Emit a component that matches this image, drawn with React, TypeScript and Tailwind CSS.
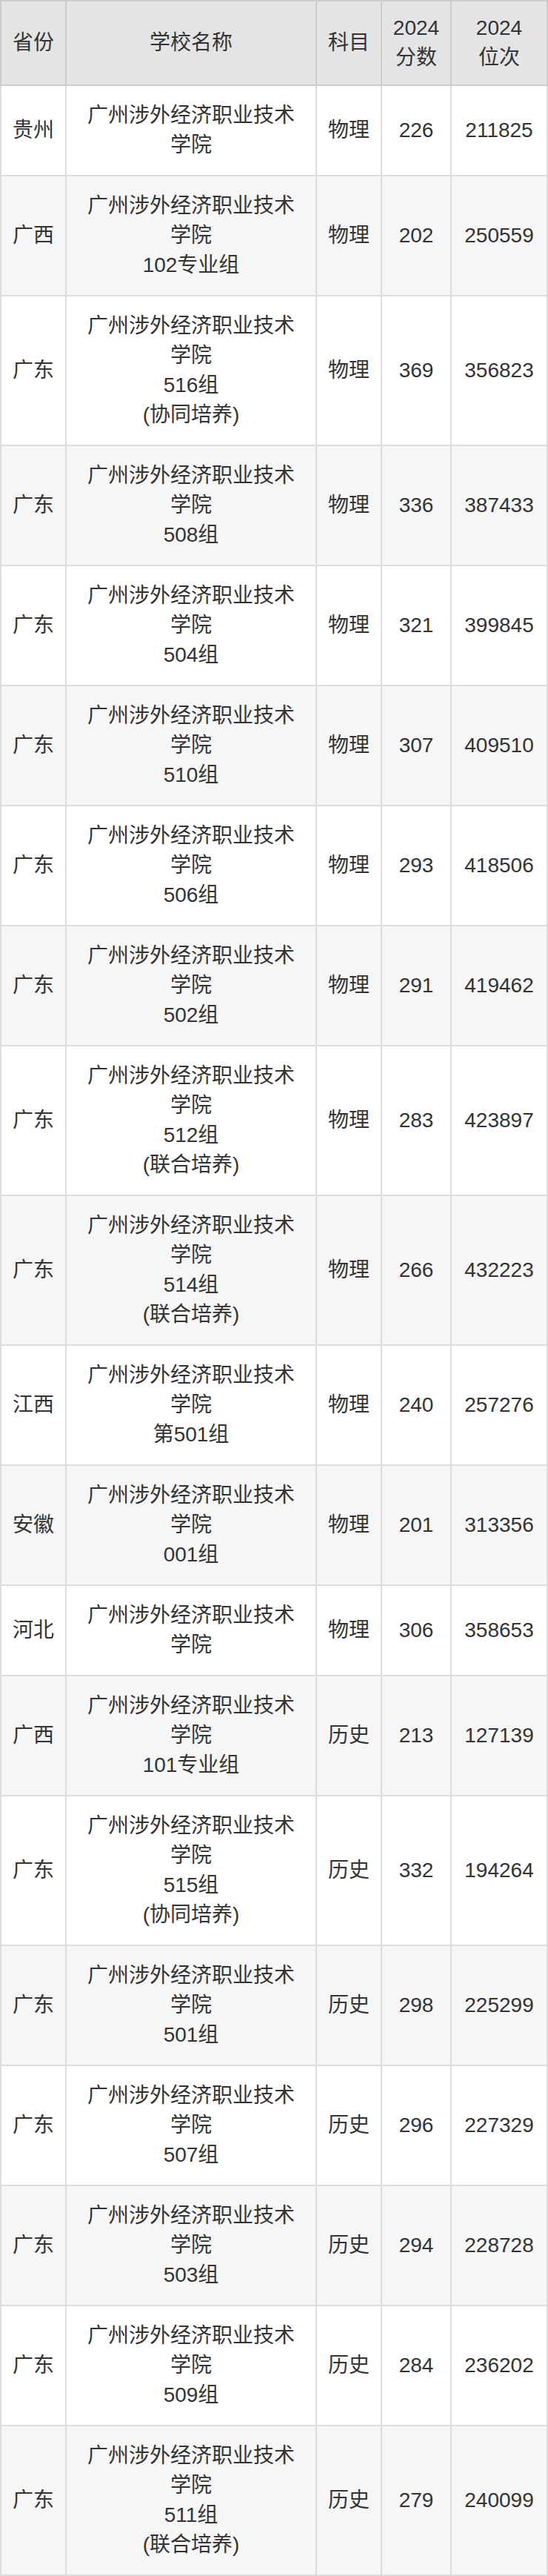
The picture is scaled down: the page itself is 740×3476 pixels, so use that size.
import React from "react"

interface Row {
  province: string
  school: string[]
  subject: string
  score: string
  rank: string
}

const SCHOOL = ["广州涉外经济职业技术学院"]

const headers: string[][] = [["省份"], ["学校名称"], ["科目"], ["2024", "分数"], ["2024", "位次"]]

const rows: Row[] = [
  { province: "贵州", school: SCHOOL, subject: "物理", score: "226", rank: "211825" },
  { province: "广西", school: [...SCHOOL, "102专业组"], subject: "物理", score: "202", rank: "250559" },
  { province: "广东", school: [...SCHOOL, "516组", "(协同培养)"], subject: "物理", score: "369", rank: "356823" },
  { province: "广东", school: [...SCHOOL, "508组"], subject: "物理", score: "336", rank: "387433" },
  { province: "广东", school: [...SCHOOL, "504组"], subject: "物理", score: "321", rank: "399845" },
  { province: "广东", school: [...SCHOOL, "510组"], subject: "物理", score: "307", rank: "409510" },
  { province: "广东", school: [...SCHOOL, "506组"], subject: "物理", score: "293", rank: "418506" },
  { province: "广东", school: [...SCHOOL, "502组"], subject: "物理", score: "291", rank: "419462" },
  { province: "广东", school: [...SCHOOL, "512组", "(联合培养)"], subject: "物理", score: "283", rank: "423897" },
  { province: "广东", school: [...SCHOOL, "514组", "(联合培养)"], subject: "物理", score: "266", rank: "432223" },
  { province: "江西", school: [...SCHOOL, "第501组"], subject: "物理", score: "240", rank: "257276" },
  { province: "安徽", school: [...SCHOOL, "001组"], subject: "物理", score: "201", rank: "313356" },
  { province: "河北", school: SCHOOL, subject: "物理", score: "306", rank: "358653" },
  { province: "广西", school: [...SCHOOL, "101专业组"], subject: "历史", score: "213", rank: "127139" },
  { province: "广东", school: [...SCHOOL, "515组", "(协同培养)"], subject: "历史", score: "332", rank: "194264" },
  { province: "广东", school: [...SCHOOL, "501组"], subject: "历史", score: "298", rank: "225299" },
  { province: "广东", school: [...SCHOOL, "507组"], subject: "历史", score: "296", rank: "227329" },
  { province: "广东", school: [...SCHOOL, "503组"], subject: "历史", score: "294", rank: "228728" },
  { province: "广东", school: [...SCHOOL, "509组"], subject: "历史", score: "284", rank: "236202" },
  { province: "广东", school: [...SCHOOL, "511组", "(联合培养)"], subject: "历史", score: "279", rank: "240099" },
]

const cols = "grid grid-cols-[86px_336px_86px_92px_128px] gap-[2px]"
const cell = "flex flex-col items-center justify-center text-center px-[15px]"

export default function App() {
  return (
    <div
      className="w-[740px] text-[28px] leading-[40px] text-[#333]"
      style={{ fontFamily: '"Liberation Sans", Arial, "Noto Sans CJK SC", sans-serif' }}
    >
      {/* Header */}
      <div className={`${cols} p-[2px] bg-[#cccccc]`}>
        {headers.map((h) => (
          <div key={h.join("")} className={`${cell} py-4 bg-[#e4e4e4]`}>
            {h.map((line) => (
              <div key={line} className="whitespace-nowrap">{line}</div>
            ))}
          </div>
        ))}
      </div>

      {/* Body */}
      <div className={`${cols} px-[2px] pb-[2px] pt-0 bg-[#dddddd]`}>
        {rows.map((r, i) => {
          const bg = i % 2 === 0 ? "bg-white" : "bg-[#f6f6f6]"
          return (
            <React.Fragment key={i}>
              <div className={`${cell} py-5 ${bg}`}>{r.province}</div>
              <div className={`${cell} py-5 ${bg}`}>
                {r.school.map((line) => (
                  <div key={line}>{line}</div>
                ))}
              </div>
              <div className={`${cell} py-5 ${bg}`}>{r.subject}</div>
              <div className={`${cell} py-5 ${bg}`}>{r.score}</div>
              <div className={`${cell} py-5 ${bg}`}>{r.rank}</div>
            </React.Fragment>
          )
        })}
      </div>
    </div>
  )
}
